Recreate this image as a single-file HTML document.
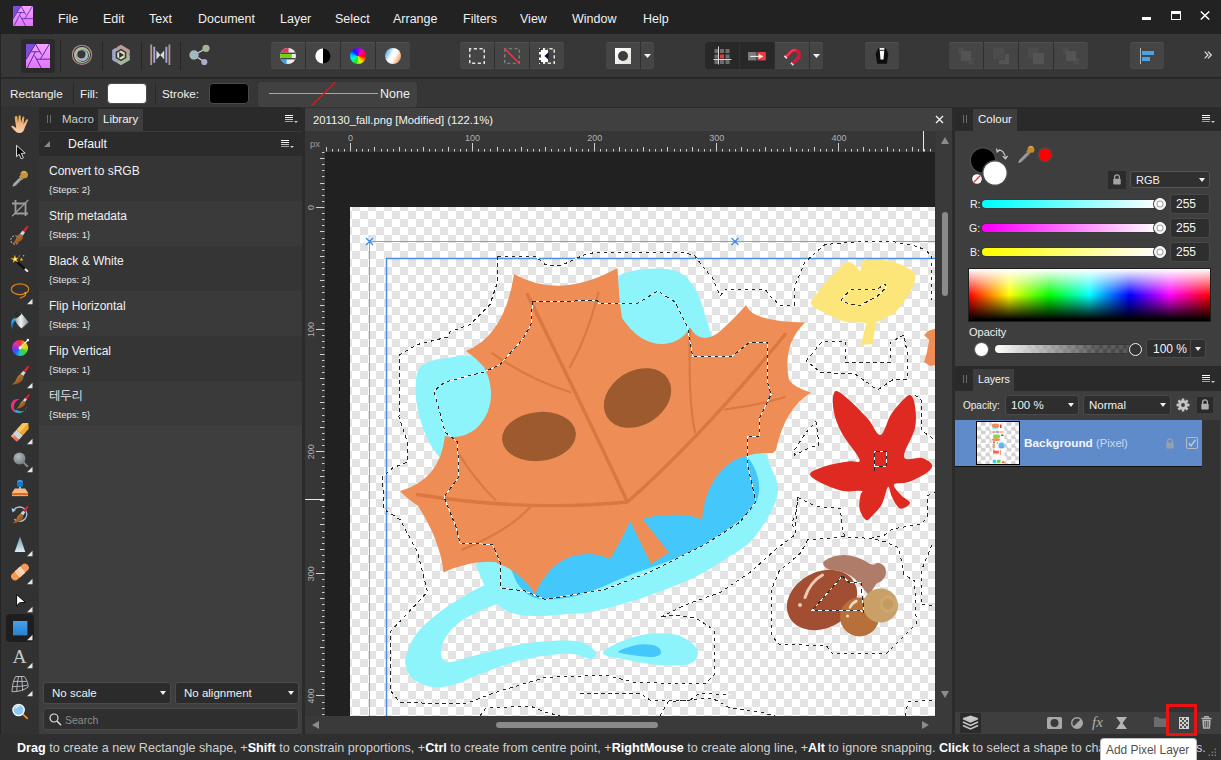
<!DOCTYPE html>
<html lang="en">
<head>
<meta charset="utf-8">
<title>Affinity Photo</title>
<style>
*{box-sizing:border-box;margin:0;padding:0}
html,body{width:1221px;height:760px;overflow:hidden;background:#2b2b2b}
body{font-family:"Liberation Sans","NanumGothic","Noto Sans CJK KR",sans-serif;font-size:12px;color:#e8e8e8;position:relative}
.abs{position:absolute}
#menubar{left:0;top:0;width:1221px;height:34px;background:#222222}
#menubar .mi{position:absolute;top:12px;font-size:12.5px;color:#f0f0f0;line-height:14px;white-space:nowrap}
#toolbar{left:0;top:34px;width:1221px;height:44px;background:#373737;border-bottom:1px solid #262626}
#ctxbar{left:0;top:79px;width:1221px;height:28px;background:#363636}
#ctxbar .t{position:absolute;top:8px;font-size:11.700px;line-height:14px;color:#f0f0f0;white-space:nowrap}
#tools{left:0;top:107px;width:39px;height:627px;background:#323232}
#macro{left:39px;top:107px;width:263px;height:627px;background:#3e3e3e}
.phead{position:absolute;left:0;top:0;right:0;height:24px;background:#2a2a2a}
.tab{position:absolute;top:2px;height:22px;font-size:11.5px;line-height:14px;padding-top:3px;color:#cfcfcf;white-space:nowrap}
.tab.on{background:#3e3e3e;color:#f4f4f4}
.grip{position:absolute;top:8px;width:4px;height:8px;border-left:1px solid #6c6c6c;border-right:1px solid #6c6c6c}
.row{position:absolute;left:0;width:263px;height:45px}
.row b{position:absolute;left:10px;top:8px;font-weight:normal;font-size:12px;line-height:14px;color:#f0f0f0;white-space:nowrap}
.row i{position:absolute;left:10px;top:27.500px;font-style:normal;font-size:9.500px;line-height:11px;color:#e6e6e6;white-space:nowrap}
#doc{left:305px;top:108px;width:647px;height:626px;background:#383838}
#right{left:955px;top:108px;width:266px;height:626px;background:#3e3e3e}
#status{left:0;top:734px;width:1221px;height:26px;background:#2f2f2f;font-size:12.600px;line-height:14px;color:#d0d0d0;white-space:nowrap;overflow:hidden}
#status b{color:#ffffff}

#lborder{left:0;top:34px;width:1px;height:700px;background:#242424;z-index:5}
.g{position:absolute;top:8px;height:27px;background:#454545;border-radius:3px;overflow:hidden;box-shadow:0 -1px 0 #4b4b4b inset,0 1px 0 #4f4f4f inset}
.g .d{position:absolute;top:0;width:1px;height:28px;background:#2f2f2f}
.g .dk{position:absolute;top:0;height:28px;background:#282828}
.sep{position:absolute;top:8px;width:1px;height:28px;background:#262626}
svg{position:absolute;overflow:visible}

.pm{position:absolute;width:12px;height:9px}
.pm:before{content:"";position:absolute;left:0;top:0;width:8px;height:7px;background:linear-gradient(#fff 0 1px,transparent 1px 2px,#f0f0f0 2px 3px,transparent 3px 4px,#c4c4c4 4px 5px,transparent 5px 6px,#a0a0a0 6px 7px)}
.pm:after{content:"";position:absolute;left:9px;top:6px;border:2px solid transparent;border-top:2.500px solid #c8c8c8;border-bottom:0}
.dd{position:absolute;height:22px;background:#2b2b2b;border:1px solid #4a4a4a;border-radius:3px;font-size:11.500px;line-height:14px;color:#f0f0f0;padding:3px 0 0 8px;white-space:nowrap}
.dd:after{content:"";position:absolute;right:4px;top:50%;margin-top:-2px;border:3.500px solid transparent;border-top:4px solid #f0f0f0;border-bottom:0}
</style>
</head>
<body>
<div id="lborder" class="abs"></div>
<!-- MENUBAR -->
<div id="menubar" class="abs">
<svg width="0" height="0" style="left:0;top:0"><defs>
<linearGradient id="lg1" x1="0" y1="0" x2="0" y2="1"><stop offset="0" stop-color="#f4a4ff"/><stop offset="1" stop-color="#e474fa"/></linearGradient>
<g id="aflogo"><rect width="24" height="24" fill="url(#lg1)"/><path d="M0 0h9.500L0 15.600z" fill="#7a4ed8"/><g stroke="#5b2aa6" stroke-width="1" fill="none"><path d="M9.500 0L0 15.600"/><path d="M23.500 0L14.300 15.200"/><path d="M9.500 0L15.600 10.600"/><path d="M5.300 7.800H13.800"/><path d="M9.400 7.800L1.200 24"/><path d="M8.600 11.600L15.200 24"/><path d="M10.400 15.200H24"/></g></g>
</defs></svg>
<svg style="left:13px;top:6px" width="20" height="20" viewBox="0 0 24 24"><use href="#aflogo"/></svg>
<span class="mi" style="left:58px">File</span>
<span class="mi" style="left:103px">Edit</span>
<span class="mi" style="left:149px">Text</span>
<span class="mi" style="left:198px">Document</span>
<span class="mi" style="left:280px">Layer</span>
<span class="mi" style="left:335px">Select</span>
<span class="mi" style="left:393px">Arrange</span>
<span class="mi" style="left:463px">Filters</span>
<span class="mi" style="left:520px">View</span>
<span class="mi" style="left:572px">Window</span>
<span class="mi" style="left:643px">Help</span>
<div class="abs" style="left:1142px;top:17px;width:9px;height:3px;background:#fff"></div>
<div class="abs" style="left:1171px;top:11px;width:10px;height:9px;border:1px solid #fff;border-top-width:3px"></div>
<svg style="left:1200px;top:11px" width="10" height="9" viewBox="0 0 10 9"><path d="M0.800 0.500L9.200 8.500M9.200 0.500L0.800 8.500" stroke="#fff" stroke-width="1.500"/></svg>
</div>
<!-- TOOLBAR -->
<div id="toolbar" class="abs">

<div class="abs" style="left:21px;top:5px;width:34px;height:34px;background:#2a2a2a;border-radius:3px"></div>
<svg style="left:26px;top:10px" width="24" height="24" viewBox="0 0 24 24"><use href="#aflogo"/></svg>
<div class="sep" style="left:60px;top:6px;height:32px"></div>
<div class="sep" style="left:102px"></div>
<div class="sep" style="left:141px"></div>
<div class="sep" style="left:180px"></div>
<!-- liquify persona -->
<svg style="left:71px;top:10px" width="22" height="22" viewBox="71 44 22 22"><circle cx="82" cy="54.800" r="9.600" fill="none" stroke="#b08c86" stroke-width="1.100"/><path fill-rule="evenodd" fill="#b2bd9e" d="M74 55a8 8 0 1 0 16 0a8 8 0 1 0-16 0zM76.500 55.700a6.200 6.200 0 1 0 12.400 0a6.200 6.200 0 1 0-12.400 0z"/><path fill-rule="evenodd" fill="#a0b4c8" d="M76.400 55.300a5.900 5.900 0 1 0 11.800 0a5.900 5.900 0 1 0-11.800 0zM77.300 54.300a4.100 4.100 0 1 0 8.200 0a4.100 4.100 0 1 0-8.200 0z"/></svg>
<!-- develop persona -->
<svg style="left:109px;top:9px" width="24" height="24" viewBox="-12 -12 24 24"><path d="M-4.00 -7.90L0.00 -10.20L8.83 -5.10L8.83 -0.30L5.40 -0.30L5.40 -3.10L0.00 -6.20L-4.00 -3.90z" fill="#c09c98"/><path d="M8.84 0.49L8.83 5.10L0.00 10.20L-4.16 7.80L-2.44 4.83L-0.02 6.23L5.37 3.10L5.38 -1.51z" fill="#a6b996"/><path d="M-4.84 7.41L-8.83 5.10L-8.83 -5.10L-4.67 -7.50L-2.96 -4.53L-5.38 -3.13L-5.37 3.10L-1.38 5.41z" fill="#a2a6c8"/><path d="M0.00 -4.40L3.81 -2.20L3.81 2.20L0.00 4.40L-3.81 2.20L-3.81 -2.20z" fill="#dcdcc0"/><path d="M-1.800 -2.900L3 0L-1.800 2.900z" fill="#2e2e2e"/></svg>
<!-- tone mapping persona -->
<svg style="left:150px;top:10px" width="21" height="22" viewBox="0 0 21 22"><rect x="0.3" y="0.5" width="1.8" height="20.5" fill="#b8948f"/><rect x="18.5" y="0.5" width="1.8" height="20.5" fill="#b8948f"/><rect x="3.3" y="2.8" width="1.9" height="16" fill="#a9a7d2"/><rect x="15.4" y="2.8" width="1.9" height="16" fill="#a9a7d2"/><path d="M6.4 6.4l4 4.6-4 4.6z" fill="#d8d8e4"/><path d="M14.2 6.4l-4 4.6 4 4.6z" fill="#d8d8e4"/></svg>
<!-- export persona -->
<svg style="left:188px;top:9px" width="24" height="24" viewBox="0 0 24 24"><path d="M6 12L18 5.5M6 12l10.5 7" stroke="#d2d6d8" stroke-width="1.4" fill="none"/><circle cx="6" cy="12" r="4.7" fill="#a3b8c0"/><circle cx="18" cy="5.3" r="3.6" fill="#a3b394"/><circle cx="16.3" cy="19" r="3.1" fill="#b0aacb"/></svg>
<!-- auto group -->
<div class="g" style="left:271px;width:139px"><div class="d" style="left:34px"></div><div class="d" style="left:69px"></div><div class="d" style="left:104px"></div></div>
<svg style="left:280px;top:14px" width="16" height="16" viewBox="0 0 16 16"><defs><clipPath id="cc"><circle cx="8" cy="8" r="8"/></clipPath></defs><g clip-path="url(#cc)"><rect width="16" height="16" fill="#ececec"/><rect x="0" y="0" width="8.6" height="4.6" fill="#f0325a"/><rect x="0" y="6" width="11.8" height="4" fill="#6fd416"/><rect x="0" y="11.4" width="6.6" height="4.6" fill="#3aa0f0"/><rect x="0" y="4.6" width="16" height="1.4" fill="#454545"/><rect x="0" y="10" width="16" height="1.4" fill="#454545"/></g></svg>
<svg style="left:315px;top:14px" width="16" height="16" viewBox="0 0 16 16"><circle cx="8" cy="8" r="8" fill="#555"/><path d="M8 0.4a7.6 7.6 0 0 0 0 15.2z" fill="#fff"/><path d="M8 0.4a7.6 7.6 0 0 1 0 15.2z" fill="#000"/></svg>
<div class="abs" style="left:350px;top:14px;width:16px;height:16px;border-radius:50%;background:conic-gradient(from 90deg,#ff0000,#ffb000 12%,#e8ff00 20%,#20e020 30%,#00ffd0 42%,#00c0ff 52%,#0020ff 64%,#8000ff 74%,#ff00c0 86%,#ff0000)"></div>
<div class="abs" style="left:385px;top:14px;width:16px;height:16px;border-radius:50%;background:linear-gradient(118deg,#3f9fe6 8%,#ffffff 42%,#ffffff 58%,#f08a3c 92%)"></div>
<!-- selection group -->
<div class="g" style="left:460px;width:104px"><div class="d" style="left:34px"></div><div class="d" style="left:69px"></div></div>
<svg style="left:469px;top:14px" width="16" height="16" viewBox="0 0 16 16"><rect x="0.75" y="0.75" width="14.5" height="14.5" fill="none" stroke="#e2e2e2" stroke-width="1.5" stroke-dasharray="3.2 2.45" stroke-dashoffset="1.6"/></svg>
<svg style="left:504px;top:14px" width="16" height="16" viewBox="0 0 16 16"><rect x="0.75" y="0.75" width="14.5" height="14.5" fill="none" stroke="#8a8a8a" stroke-width="1.2" stroke-dasharray="3.2 2.45" stroke-dashoffset="1.6"/><path d="M0.5 0.5L15.5 15.5" stroke="#f0323c" stroke-width="1.7"/></svg>
<svg style="left:539px;top:14px" width="16" height="16" viewBox="0 0 16 16"><rect x="0" y="0" width="9" height="16" fill="#fff"/><rect x="0.75" y="0.75" width="14.5" height="14.5" fill="none" stroke="#e2e2e2" stroke-width="1.5" stroke-dasharray="3.2 2.45" stroke-dashoffset="1.6"/><path d="M1 1h3M1 1v3M1 15h3M1 15v-3M6.2 1h2.6M6.2 15h2.6M1 6.5v3" stroke="#111" stroke-width="1.5" fill="none"/><path d="M9.6 4.2L5.4 8l4.2 3.8z" fill="#0c1030"/></svg>
<!-- mask -->
<div class="g" style="left:606px;width:48px"><div class="d" style="left:34px"></div></div>
<div class="abs" style="left:615px;top:14px;width:16px;height:16px;background:linear-gradient(135deg,#ffffff,#e4e2dc)"></div>
<div class="abs" style="left:618px;top:17px;width:10px;height:10px;border-radius:50%;background:#3c3c3c"></div>
<svg style="left:644px;top:20px" width="7" height="4" viewBox="0 0 7 4"><path d="M0 0h7L3.5 4z" fill="#f2f2f2"/></svg>
<!-- snapping group -->
<div class="g" style="left:705px;width:118px"><div class="dk" style="left:0;width:34px"></div><div class="dk" style="left:35px;width:34px"></div><div class="d" style="left:34px;background:#333"></div><div class="d" style="left:69px"></div><div class="d" style="left:104px"></div></div>
<svg style="left:713px;top:12px" width="19" height="19" viewBox="0 0 19 19"><g fill="#6e6e6e"><rect x="1.5" y="3" width="4" height="4"/><rect x="7" y="3" width="4" height="4"/><rect x="12.5" y="3" width="4" height="4"/><rect x="1.5" y="8.5" width="4" height="4"/><rect x="12.5" y="8.5" width="4" height="4"/><rect x="1.5" y="14" width="4" height="4"/><rect x="7" y="14" width="4" height="4"/><rect x="12.5" y="14" width="4" height="4"/></g><rect x="7" y="8.5" width="4" height="4" fill="#ee3338"/><path d="M5.5 0.5v18M0.5 13.5h18" stroke="#d8d8d8" stroke-width="1"/></svg>
<svg style="left:748px;top:18px" width="18" height="9" viewBox="0 0 18 9"><rect x="0" y="0" width="8.4" height="8.4" fill="#7a7a7a"/><rect x="9.4" y="0" width="8.4" height="8.4" fill="#ee3d40"/><path d="M2.2 4.4h9.5" stroke="#eee" stroke-width="1.1"/><path d="M10.6 1.7L15.4 4.4l-4.8 2.7z" fill="#eee"/></svg>
<svg style="left:782px;top:12px" width="21" height="21" viewBox="0 0 21 21"><path d="M3.6 11.2L9.2 5.6a4.7 4.7 0 0 1 6.7 6.7L10.2 18" fill="none" stroke="#d81838" stroke-width="3.600"/><path d="M4.3 10.5L9.6 5.2a4.4 4.4 0 0 1 4.4-1" fill="none" stroke="#f0506a" stroke-width="1.2"/><path d="M3.1 11.7l1.1-1.1M9.6 18.6l1.1-1.1" stroke="#e8e4e4" stroke-width="3.600"/></svg>
<svg style="left:813px;top:20px" width="7" height="4" viewBox="0 0 7 4"><path d="M0 0h7L3.5 4z" fill="#f2f2f2"/></svg>
<!-- assistant -->
<div class="g" style="left:865px;width:34px"></div>
<svg style="left:875px;top:13px" width="14" height="17" viewBox="0 0 14 17"><path d="M3.2 1.2h7.6l2.6 5.5-1.6 10H2.2l-1.6-10z" fill="#0d0d0d"/><path d="M4.6 1h4.8v2.2H4.600z" fill="#f4f4f4"/><path d="M4.8 4h4.400l-0.700 8.600H5.500z" fill="#ffffff"/><path d="M4.600 3.100h4.800" stroke="#777" stroke-width="0.800"/></svg>
<!-- disabled group -->
<div class="g" style="left:949px;width:139px"><div class="d" style="left:34px"></div><div class="d" style="left:69px"></div><div class="d" style="left:104px"></div></div>
<svg style="left:949px;top:8px" width="139" height="28" viewBox="0 0 139 28"><g fill="#4c4c4c"><rect x="9" y="6" width="6" height="6"/><rect x="19" y="16" width="6" height="6"/><rect x="44" y="6" width="11" height="11"/><rect x="79" y="6" width="10" height="10"/><rect x="114" y="6" width="6" height="6"/><rect x="124" y="16" width="6" height="6"/></g><g fill="#545454"><rect x="12" y="9" width="10" height="10"/><path d="M60 12v10H50v-4h6v-6z"/><rect x="84" y="11" width="11" height="11"/><rect x="117" y="9" width="10" height="10"/></g></svg>
<!-- align -->
<div class="g" style="left:1130px;width:34px"></div>
<svg style="left:1139px;top:14px" width="16" height="16" viewBox="0 0 16 16"><rect x="1" y="0" width="1" height="16" fill="#b4b4b4"/><rect x="3" y="3" width="12" height="4" fill="#4aa3e6"/><rect x="3" y="9" width="8" height="4" fill="#4aa3e6"/></svg>
<svg style="left:1204px;top:17px" width="8" height="8" viewBox="0 0 8 8"><path d="M0.700 0.700L4 4 0.700 7.300M4 0.700L7.300 4 4 7.300" fill="none" stroke="#e0e0e0" stroke-width="1.200"/></svg>

</div>
<!-- CONTEXT BAR -->
<div id="ctxbar" class="abs">
<span class="t" style="left:10px">Rectangle</span>
<span class="t" style="left:80px">Fill:</span>
<span class="t" style="left:162px">Stroke:</span>
<span class="t" style="left:380px;z-index:2;font-size:12.500px">None</span>
<div class="abs" style="left:73px;top:4px;width:1px;height:21px;background:#282828"></div>
<div class="abs" style="left:155px;top:4px;width:1px;height:21px;background:#282828"></div>
<div class="abs" style="left:107px;top:4px;width:40px;height:21px;border:1px solid #4a4a4a;border-radius:4px;background:#fff"></div>
<div class="abs" style="left:209px;top:4px;width:40px;height:21px;border:1px solid #4a4a4a;border-radius:4px;background:#000"></div>
<div class="abs" style="left:258px;top:3px;width:159px;height:25px;background:#414141;border-radius:3px;box-shadow:0 0 0 1px #333"></div>
<svg style="left:258px;top:3px" width="159" height="25" viewBox="0 0 159 25"><path d="M11 11.500H120" stroke="#a8a8a8" stroke-width="1"/><path d="M54 23.500L77.500 0" stroke="#e01818" stroke-width="1.300"/></svg>

</div>
<!-- LEFT TOOLS -->
<div id="tools" class="abs">
<div class="abs" style="left:12px;top:233px;width:16px;height:16px;border-radius:50%;background:conic-gradient(from 0deg,#f03030,#f0a020 12%,#e8e820 22%,#38d828 36%,#20c8c0 50%,#2860f0 62%,#9030e0 76%,#e030b0 88%,#f03030)"></div>
<svg style="left:0;top:0" width="39" height="627" viewBox="0 107 39 627">
<defs>
<linearGradient id="hand" x1="0" y1="0" x2="0" y2="1"><stop offset="0" stop-color="#e0a24c"/><stop offset="0.550" stop-color="#f0b884"/><stop offset="1" stop-color="#f8d0b4"/></linearGradient>
<linearGradient id="bristle" x1="0" y1="0" x2="1" y2="1"><stop offset="0" stop-color="#d89a50"/><stop offset="1" stop-color="#7a3c0c"/></linearGradient>
<linearGradient id="cone" x1="0" y1="0" x2="0" y2="1"><stop offset="0" stop-color="#6e9eb2"/><stop offset="1" stop-color="#dcebf0"/></linearGradient>
<linearGradient id="bluesq" x1="0" y1="0" x2="0" y2="1"><stop offset="0" stop-color="#45a2ee"/><stop offset="1" stop-color="#2a80cc"/></linearGradient>
<linearGradient id="silver" x1="0" y1="0" x2="1" y2="0"><stop offset="0" stop-color="#8c979c"/><stop offset="0.450" stop-color="#eef2f4"/><stop offset="1" stop-color="#7c878c"/></linearGradient>
<radialGradient id="dodge" cx="0.400" cy="0.350" r="0.700"><stop offset="0" stop-color="#b4bcc0"/><stop offset="1" stop-color="#727c82"/></radialGradient>
<g id="brush"><path d="M17.500 0.200L14 5.800l-2.600-1.600 4.200-4.600c0.800-0.800 2.400 0 1.900 0.600z" fill="#e8202c"/><path d="M11.400 4.200l2.600 1.600-2.200 3.400-3-1.900z" fill="#d4d8da"/><path d="M8.800 7.300l3 1.900c0.600 2.600-0.800 5-3.600 6.600-2.400 1.400-5.600 2-8.200 2 2.400-1.200 3.600-2.600 4.600-5 0.900-2.300 2.200-4.500 4.200-5.500z" fill="url(#bristle)"/></g>
</defs>
<!-- hand -->
<path d="M15.600 116.200c1-0.500 1.700 0 1.800 1l0.600 5.800 0.700-7c0.100-1.100 1.900-1.100 2 0l0.300 7.100 1.500-5.900c0.300-1 1.900-0.700 1.800 0.400l-0.800 6.600 2.800-4.600c0.600-0.900 2-0.200 1.600 0.800l-2.800 6.600c-0.800 2-1.100 3.800-2.600 5-1.600 1.200-4.300 1.300-6 0.200-1.400-0.900-2.700-2.800-4.900-4.900-0.800-0.800 0-2.100 1.300-1.500l3.300 2.100-1.500-10.300c-0.100-0.700 0.300-1.200 0.900-1.400z" fill="url(#hand)"/>
<!-- move arrow -->
<path d="M16.500 145.300v11.400l2.700-2.400 2 4.500 2.200-1-2-4.400 3.800-0.200z" fill="#0a0a0a" stroke="#d8d8d8" stroke-width="1" stroke-linejoin="round"/>
<!-- dropper -->
<path d="M12.300 186.800l1.300-3.200 6.600-6.700 2.200 2.200-6.800 6.600z" fill="#9a9a9a"/><path d="M13 186l6.600-7.400" stroke="#c8c8c8" stroke-width="0.800"/>
<path d="M19 176.600l1.700-1.500c-0.800-1.400-0.300-2.400 0.700-3.300 1.500-1.300 3.800-1.300 5.400 0.200 1.500 1.400 1.700 3.800 0.400 5.300-0.900 1-2 1.400-3.300 0.800l-1.600 1.800z" fill="#c8943a"/><path d="M22 172.400c1.300-1 3-0.800 4 0.100" stroke="#e8c070" stroke-width="0.900" fill="none"/>
<!-- crop -->
<path d="M15.500 200v13.500H28M12 203.500h13.500V216" fill="none" stroke="#9c9c9c" stroke-width="1.800"/><path d="M12 216.200L28.300 200" stroke="#9c9c9c" stroke-width="1.200"/>
<!-- selection brush -->
<circle cx="15" cy="240" r="4.200" fill="none" stroke="#c8c8c8" stroke-width="1" stroke-dasharray="1.800 1.500"/>
<use href="#brush" transform="translate(11.500 226.800) scale(0.960)"/>
<!-- wand -->
<path d="M17.500 262.500L27.300 271" stroke="#0c0c0c" stroke-width="2.200" stroke-linecap="round"/><path d="M25.600 269.500l1.700 1.500" stroke="#e8e8e8" stroke-width="2.200" stroke-linecap="round"/>
<path d="M15 254.800l0.900 3.300 3.300-0.500-2.700 1.900 1.600 3-2.900-1.700-2.500 2.300 0.800-3.200-3.100-1.300 3.300-0.400z" fill="#f8c020"/><circle cx="15.200" cy="259.300" r="1.100" fill="#fff4c0"/>
<path d="M21.500 257.500l0.500 1.300 1.300 0.200-1.100 0.800 0.300 1.400-1.100-0.800-1.100 0.700 0.400-1.300-1-0.900 1.300-0.100z" fill="#f0b818"/><circle cx="23.600" cy="255.800" r="0.700" fill="#f0b818"/><circle cx="19.300" cy="256" r="0.600" fill="#f0b818"/>
<!-- lasso -->
<ellipse cx="20" cy="289.200" rx="8.700" ry="5.400" fill="none" stroke="#e08218" stroke-width="1.200"/><path d="M25.300 292.800c1 1.800-0.500 3.600-2.400 4-1.800 0.300-2.700 0.800-2.800 2" fill="none" stroke="#e08218" stroke-width="1.200"/><circle cx="25.300" cy="293" r="1.100" fill="#f0a030"/>
<path d="M32.500 298.8v5.500h-5.500z" fill="#e4e4e4"/>
<!-- bucket -->
<path d="M15.200 318c-2.800 0.200-4.200 2.800-4 6.400 0.100 1.800 0.500 3 1.300 4.600-0.400-3.400 0.400-6.200 3.200-8.400z" fill="#1e8ee0"/><path d="M12 322c0.500-2 1.800-3.400 3.600-3.600" stroke="#70c8ff" stroke-width="0.800" fill="none"/>
<path d="M14.300 317.500l6.200-5.300 8.200 10-7 6.400c-3.400-2.400-6.200-6.400-7.400-11.100z" fill="url(#silver)"/><path d="M14.300 317.500c1.600-2.500 4-4.500 6.200-5.300 1 0.600 1.200 1.400 0.600 2.400-1.400 1.800-3.400 3.200-5.400 3.900-0.800 0.100-1.400-0.300-1.400-1z" fill="#2a2e30"/><path d="M21.700 328.600l7-6.400" stroke="#5c666a" stroke-width="1"/><path d="M19 311.600c-2.500 0.500-4 2-4.500 4" stroke="#222" stroke-width="0.900" fill="none"/>
<!-- colour wheel brush -->

<path d="M20 348l7.800-7.800" stroke="#fff" stroke-width="1.100"/><circle cx="20" cy="348" r="1.400" fill="#fff"/><circle cx="27.900" cy="340.100" r="1.300" fill="#fff"/>
<!-- paint brush -->
<use href="#brush" transform="translate(11.600 366.800) scale(1)"/>
<path d="M32.500 382.8v5.500h-5.500z" fill="#e4e4e4"/>
<!-- mixer brush -->
<path d="M19.500 399.300c-4.600-1.200-8.600 2-8.600 6.400 0 4.200 3.400 7.400 7.800 7.200-3.200-0.800-5-3.600-4.800-6.600 0.200-3.200 2.400-5.800 5.600-7z" fill="#e8307c"/><path d="M13.700 410.500c1.800 2 4.400 2.800 7 2.200 1.600-0.400 2.800-1 3.800-1.900-2.600 0.800-5.200 0.900-7.600-0.700z" fill="#20b8d8"/><circle cx="25.600" cy="409" r="0.500" fill="#20c8e0"/><circle cx="26.600" cy="407.300" r="0.400" fill="#20c8e0"/>
<use href="#brush" transform="translate(16 394.800) scale(0.780)"/>
<!-- eraser -->
<g transform="rotate(-48 20 432)"><rect x="10.600" y="428" width="3.600" height="8.400" rx="1.200" fill="#f07058"/><rect x="10.800" y="428" width="3.200" height="2.400" rx="1" fill="#f8a090"/><rect x="13.600" y="428" width="6" height="8.400" fill="#c4c8ca"/><path d="M15 428v8.400M16.600 428v8.400M18.200 428v8.400" stroke="#f0f0f0" stroke-width="0.600"/><path d="M19.600 428h8.600l4 4.200-4 4.200h-8.600z" fill="#f0a830"/><path d="M19.600 428h8.600l4 4.200H19.600z" fill="#f8c860"/></g>
<path d="M32.500 438.8v5.500h-5.500z" fill="#e4e4e4"/>
<!-- dodge -->
<path d="M23.500 462.500l3.800 3.800" stroke="#7c8890" stroke-width="2" stroke-linecap="round"/><circle cx="19.500" cy="458.400" r="6" fill="url(#dodge)"/>
<path d="M32.500 466.8v5.500h-5.500z" fill="#e4e4e4"/>
<!-- clone stamp -->
<path d="M17 482c0-1.500 1.200-2.200 3-2.200s3 0.700 3 2.200v3.600c0 1-1.200 1.700-3 1.700s-3-0.700-3-1.700z" fill="#1878c8"/><path d="M17.800 481.400c1-0.600 3.400-0.600 4.400 0" stroke="#60b8f0" stroke-width="1" fill="none"/><rect x="19.300" y="487" width="1.400" height="3" fill="#e4e4e4"/>
<path d="M14.800 488.500h10.400l3 4.500H11.800z" fill="#f4bc80"/><path d="M11.800 493h16.400v2.200H11.800z" fill="#e06820"/><path d="M12 495.200h16v0.900H12z" fill="#f8d0a0"/>
<!-- undo brush -->
<path d="M13.600 510.200a7.200 7.200 0 1 1 0.800 9" fill="none" stroke="#a8c8e8" stroke-width="1.300"/><path d="M11.600 508l0.800 4.400 3.600-2.400z" fill="#a8c8e8"/>
<use href="#brush" transform="translate(12.400 506.800) scale(0.920)"/>
<!-- sharpen -->
<path d="M20 536.500l5.300 15.500H14.700z" fill="url(#cone)"/>
<path d="M32.500 550.8v5.500h-5.500z" fill="#e4e4e4"/>
<!-- bandaid -->
<g transform="rotate(-42 20 572)"><rect x="9.500" y="568" width="21" height="8" rx="4" fill="#f09c58"/><rect x="16.400" y="568" width="7.200" height="8" fill="#f8d4b8"/><path d="M18.500 568v8" stroke="#f0b088" stroke-width="0.800"/></g>
<path d="M32.500 578.8v5.500h-5.500z" fill="#e4e4e4"/>
<!-- node arrow -->
<path d="M16.600 594.500v11.600l2.900-3.300 5.900-0.400z" fill="#ffffff" stroke="#0c0c0c" stroke-width="1" stroke-linejoin="round"/>
<path d="M32.500 606.8v5.500h-5.500z" fill="#e4e4e4"/>
<!-- rectangle (selected) -->
<rect x="6" y="614" width="28" height="28" rx="4" fill="#1e1e1e"/>
<rect x="13" y="621" width="14.400" height="14.400" fill="url(#bluesq)"/>
<path d="M32.500 634.8v5.500h-5.500z" fill="#e4e4e4"/>
<!-- text -->
<text x="12.600" y="663" font-family="Liberation Serif,serif" font-size="19.500" fill="#c8c8c8">A</text>
<path d="M32.500 662.8v5.500h-5.500z" fill="#e4e4e4"/>
<!-- mesh warp -->
<path d="M15.600 676.500h8.600c2.400 2.800 3.800 6.400 4 10.400-3.600 3.200-10 5-16.200 4.800 0.200-6 1.400-11.200 3.600-15.200z" fill="#2c3038" stroke="#c4c4c4" stroke-width="0.900"/><path d="M18.600 676.500c-1 4-1.800 9.600-1.800 15M21.600 676.500c0.400 4.800 0.900 10 1.100 14.200M13.800 681.400h12.800M12.500 686.600c5.200 0 10.600-0.400 14.800-1.400" fill="none" stroke="#c4c4c4" stroke-width="0.900"/>
<path d="M32.500 690.8v5.500h-5.500z" fill="#e4e4e4"/>
<!-- zoom -->
<path d="M22.800 714.200l4.400 4.200" stroke="#f09030" stroke-width="1.800" stroke-linecap="round"/><circle cx="18.600" cy="710" r="5.600" fill="#8cc8f4" stroke="#f4f4f4" stroke-width="1.500"/><path d="M15.600 708.600c0.600-1.600 2-2.400 3.600-2.400" stroke="#e0f2ff" stroke-width="1.200" fill="none"/>
</svg>

</div>
<!-- MACRO/LIBRARY PANEL -->
<div id="macro" class="abs">
<div class="phead">
<div class="grip" style="left:8px"></div>
<div class="tab" style="left:22px;padding-left:1px;width:37px">Macro</div>
<div class="tab on" style="left:59px;width:45px;padding-left:5px">Library</div>
</div>
<div class="pm" style="left:246px;top:8px"></div>
<div class="abs" style="left:0;top:24px;width:263px;height:1px;background:#3a3a3a"></div>
<div class="abs" style="left:0;top:25px;width:263px;height:24px;background:#2b2b2b"><svg style="left:5px;top:9px" width="6" height="6" viewBox="0 0 6 6"><path d="M6 0v6H0z" fill="#8a8a8a"/></svg><span class="abs" style="left:29px;top:5px;font-size:12.300px;line-height:14px;color:#f4f4f4">Default</span><div class="pm" style="left:242px;top:8px"></div></div>
<div class="row" style="top:49px;background:#353535"><b>Convert to sRGB</b><i>{Steps: 2}</i></div>
<div class="row" style="top:94px;background:#3a3a3a"><b>Strip metadata</b><i>{Steps: 1}</i></div>
<div class="row" style="top:139px;background:#353535"><b>Black &amp; White</b><i>{Steps: 2}</i></div>
<div class="row" style="top:184px;background:#3a3a3a"><b>Flip Horizontal</b><i>{Steps: 1}</i></div>
<div class="row" style="top:229px;background:#353535"><b>Flip Vertical</b><i>{Steps: 1}</i></div>
<div class="row" style="top:274px;background:#3a3a3a"><b>테두리</b><i>{Steps: 5}</i></div>
<div class="dd" style="left:4px;top:575px;width:128px">No scale</div>
<div class="dd" style="left:136px;top:575px;width:124px">No alignment</div>
<div class="abs" style="left:4px;top:601px;width:256px;height:22px;background:#2f2f2f;border:1px solid #484848;border-radius:4px"><svg style="left:5px;top:4px" width="13" height="13" viewBox="0 0 13 13"><circle cx="5" cy="5" r="4" fill="none" stroke="#e0e0e0" stroke-width="1.200"/><path d="M8 8l4 4.300" stroke="#e0e0e0" stroke-width="1.400"/></svg><span class="abs" style="left:21px;top:4px;font-size:10.500px;line-height:14px;color:#8c8c8c">Search</span></div>

</div>
<!-- DOCUMENT -->
<div id="doc" class="abs">
<!--DOC-START-->
<div class="abs" style="left:0;top:0;width:647px;height:23px;background:#404040"></div>
<span class="abs" style="left:8px;top:5px;font-size:11.250px;line-height:14px;color:#f2f2f2;white-space:nowrap">201130_fall.png [Modified] (122.1%)</span>
<svg style="left:630px;top:7px" width="9" height="9" viewBox="0 0 9 9"><path d="M1 1l7 7M8 1l-7 7" stroke="#f0f0f0" stroke-width="1.400"/></svg>
<div class="abs" style="left:0;top:23px;width:647px;height:603px;background:#363636"></div>
<svg style="left:0;top:23px" width="647" height="603" viewBox="305 131 647 603" font-family="Liberation Sans,sans-serif" font-size="9" fill="#b0b0b0"><text x="310" y="146.500" fill="#9a9a9a" font-size="9.500">px</text><path d="M326.5 147.0V151.500M332.5 149.0V151.500M338.5 149.0V151.500M344.5 149.0V151.500M350.5 143.0V151.500M356.5 149.0V151.500M362.5 149.0V151.500M368.5 149.0V151.500M374.5 147.0V151.500M381.5 149.0V151.500M387.5 149.0V151.500M393.5 149.0V151.500M399.5 147.0V151.500M405.5 149.0V151.500M411.5 149.0V151.500M417.5 149.0V151.500M423.5 147.0V151.500M429.5 149.0V151.500M435.5 149.0V151.500M442.5 149.0V151.500M448.5 147.0V151.500M454.5 149.0V151.500M460.5 149.0V151.500M466.5 149.0V151.500M472.5 143.0V151.500M478.5 149.0V151.500M484.5 149.0V151.500M490.5 149.0V151.500M497.5 147.0V151.500M503.5 149.0V151.500M509.5 149.0V151.500M515.5 149.0V151.500M521.5 147.0V151.500M527.5 149.0V151.500M533.5 149.0V151.500M539.5 149.0V151.500M545.5 147.0V151.500M551.5 149.0V151.500M558.5 149.0V151.500M564.5 149.0V151.500M570.5 147.0V151.500M576.5 149.0V151.500M582.5 149.0V151.500M588.5 149.0V151.500M594.5 143.0V151.500M600.5 149.0V151.500M606.5 149.0V151.500M613.5 149.0V151.500M619.5 147.0V151.500M625.5 149.0V151.500M631.5 149.0V151.500M637.5 149.0V151.500M643.5 147.0V151.500M649.5 149.0V151.500M655.5 149.0V151.500M661.5 149.0V151.500M667.5 147.0V151.500M674.5 149.0V151.500M680.5 149.0V151.500M686.5 149.0V151.500M692.5 147.0V151.500M698.5 149.0V151.500M704.5 149.0V151.500M710.5 149.0V151.500M716.5 143.0V151.500M722.5 149.0V151.500M729.5 149.0V151.500M735.5 149.0V151.500M741.5 147.0V151.500M747.5 149.0V151.500M753.5 149.0V151.500M759.5 149.0V151.500M765.5 147.0V151.500M771.5 149.0V151.500M777.5 149.0V151.500M783.5 149.0V151.500M790.5 147.0V151.500M796.5 149.0V151.500M802.5 149.0V151.500M808.5 149.0V151.500M814.5 147.0V151.500M820.5 149.0V151.500M826.5 149.0V151.500M832.5 149.0V151.500M838.5 143.0V151.500M845.5 149.0V151.500M851.5 149.0V151.500M857.5 149.0V151.500M863.5 147.0V151.500M869.5 149.0V151.500M875.5 149.0V151.500M881.5 149.0V151.500M887.5 147.0V151.500M893.5 149.0V151.500M899.5 149.0V151.500M906.5 149.0V151.500M912.5 147.0V151.500M918.5 149.0V151.500M924.5 149.0V151.500M930.5 149.0V151.500" stroke="#d0d0d0" stroke-width="1" fill="none"/><text x="350.5" y="140.500" text-anchor="middle">0</text><text x="472.6" y="140.500" text-anchor="middle">100</text><text x="594.7" y="140.500" text-anchor="middle">200</text><text x="716.8" y="140.500" text-anchor="middle">300</text><text x="838.9" y="140.500" text-anchor="middle">400</text><path d="M322.0 152.5H324.500M320.0 158.5H324.500M322.0 164.5H324.500M322.0 170.5H324.500M322.0 176.5H324.500M320.0 183.5H324.500M322.0 189.5H324.500M322.0 195.5H324.500M322.0 201.5H324.500M316.0 207.5H324.500M322.0 213.5H324.500M322.0 219.5H324.500M322.0 225.5H324.500M320.0 231.5H324.500M322.0 238.5H324.500M322.0 244.5H324.500M322.0 250.5H324.500M320.0 256.5H324.500M322.0 262.5H324.500M322.0 268.5H324.500M322.0 274.5H324.500M320.0 280.5H324.500M322.0 286.5H324.500M322.0 292.5H324.500M322.0 299.5H324.500M320.0 305.5H324.500M322.0 311.5H324.500M322.0 317.5H324.500M322.0 323.5H324.500M316.0 329.5H324.500M322.0 335.5H324.500M322.0 341.5H324.500M322.0 347.5H324.500M320.0 354.5H324.500M322.0 360.5H324.500M322.0 366.5H324.500M322.0 372.5H324.500M320.0 378.5H324.500M322.0 384.5H324.500M322.0 390.5H324.500M322.0 396.5H324.500M320.0 402.5H324.500M322.0 408.5H324.500M322.0 415.5H324.500M322.0 421.5H324.500M320.0 427.5H324.500M322.0 433.5H324.500M322.0 439.5H324.500M322.0 445.5H324.500M316.0 451.5H324.500M322.0 457.5H324.500M322.0 463.5H324.500M322.0 470.5H324.500M320.0 476.5H324.500M322.0 482.5H324.500M322.0 488.5H324.500M322.0 494.5H324.500M320.0 500.5H324.500M322.0 506.5H324.500M322.0 512.5H324.500M322.0 518.5H324.500M320.0 524.5H324.500M322.0 531.5H324.500M322.0 537.5H324.500M322.0 543.5H324.500M320.0 549.5H324.500M322.0 555.5H324.500M322.0 561.5H324.500M322.0 567.5H324.500M316.0 573.5H324.500M322.0 579.5H324.500M322.0 586.5H324.500M322.0 592.5H324.500M320.0 598.5H324.500M322.0 604.5H324.500M322.0 610.5H324.500M322.0 616.5H324.500M320.0 622.5H324.500M322.0 628.5H324.500M322.0 634.5H324.500M322.0 640.5H324.500M320.0 647.5H324.500M322.0 653.5H324.500M322.0 659.5H324.500M322.0 665.5H324.500M320.0 671.5H324.500M322.0 677.5H324.500M322.0 683.5H324.500M322.0 689.5H324.500M316.0 695.5H324.500M322.0 702.5H324.500M322.0 708.5H324.500M322.0 714.5H324.500" stroke="#d0d0d0" stroke-width="1" fill="none"/><text transform="translate(314 207.5) rotate(-90)" text-anchor="middle">0</text><text transform="translate(314 329.6) rotate(-90)" text-anchor="middle">100</text><text transform="translate(314 451.7) rotate(-90)" text-anchor="middle">200</text><text transform="translate(314 573.8) rotate(-90)" text-anchor="middle">300</text><text transform="translate(314 695.9) rotate(-90)" text-anchor="middle">400</text><path d="M923.500 131V151.500" stroke="#e8e8e8" stroke-width="1"/><path d="M305 499.500H324.500" stroke="#e8e8e8" stroke-width="1"/></svg>
<div id="cv" class="abs" style="left:20px;top:44px;width:610px;height:564px;background:#212121;overflow:hidden"><!--CANVAS-START-->
<svg style="left:0;top:0" width="610" height="564" viewBox="325 152 610 564">
<defs><pattern id="chk" x="352" y="211" width="16" height="16" patternUnits="userSpaceOnUse"><rect width="16" height="16" fill="#ffffff"/><rect x="8" y="0" width="8" height="8" fill="#e3e3e3"/><rect x="0" y="8" width="8" height="8" fill="#e3e3e3"/></pattern></defs>
<rect x="350" y="207" width="600" height="520" fill="url(#chk)"/>
<path d="M477.4 561.0C474.1 567.0 479.1 571.3 480.5 575.8C481.9 580.3 483.2 583.3 486.0 588.0C488.8 592.7 493.7 600.1 497.4 604.0C501.1 607.9 504.1 609.8 508.0 611.6C511.9 613.4 514.9 614.3 520.5 615.0C526.1 615.7 533.4 616.2 541.6 616.0C549.9 615.8 561.8 614.4 570.0 613.7C578.2 613.0 579.0 614.6 591.0 612.0C603.0 609.4 624.8 603.8 642.0 598.0C659.2 592.2 679.3 584.5 694.0 577.5C708.7 570.5 720.3 562.2 730.0 556.0C739.7 549.8 745.0 547.7 752.0 540.0C759.0 532.3 767.7 518.7 772.0 510.0C776.3 501.3 778.3 495.5 778.0 488.0C777.7 480.5 772.7 471.3 770.0 465.0C767.3 458.7 767.0 452.2 762.0 450.0C757.0 447.8 750.3 448.7 740.0 452.0C729.7 455.3 716.7 462.0 700.0 470.0C683.3 478.0 663.3 491.7 640.0 500.0C616.7 508.3 583.3 513.3 560.0 520.0C536.7 526.7 513.8 533.2 500.0 540.0C486.2 546.8 480.6 555.0 477.4 561.0Z" fill="#8df4fc"/>
<path d="M505.0 578.0C499.4 576.2 490.5 582.9 484.7 585.3C478.9 587.7 477.4 588.2 470.0 592.6C462.6 597.0 449.3 604.9 440.5 611.6C431.7 618.3 423.0 625.6 417.4 632.6C411.8 639.6 408.7 648.1 406.8 653.7C404.9 659.3 404.8 661.8 405.8 666.0C406.8 670.2 408.6 675.5 413.0 679.0C417.4 682.5 425.3 686.0 432.0 687.0C438.7 688.0 445.3 687.0 453.0 685.0C460.7 683.0 469.2 678.2 478.4 674.7C487.6 671.2 498.2 667.0 508.0 664.0C517.8 661.0 526.7 658.5 537.0 656.8C547.3 655.1 562.0 653.6 570.0 653.7C578.0 653.8 581.3 656.6 585.0 657.5C588.7 658.4 590.2 659.8 592.0 659.0C593.8 658.2 596.8 655.4 596.0 653.0C595.2 650.6 591.3 646.7 587.0 644.6C582.7 642.5 578.3 641.0 570.0 640.6C561.7 640.2 547.3 640.9 537.0 642.0C526.7 643.1 518.5 644.7 508.0 647.0C497.5 649.3 483.2 653.3 474.0 655.8C464.8 658.2 457.9 660.8 453.0 661.7C448.1 662.6 446.7 662.3 444.7 661.0C442.7 659.7 441.0 657.4 441.0 653.7C441.0 650.0 442.0 644.0 444.7 639.0C447.4 634.0 451.8 628.6 457.4 624.0C463.0 619.4 471.7 614.9 478.4 611.6C485.1 608.3 490.8 606.6 497.4 604.0C504.0 601.4 516.7 600.3 518.0 596.0C519.3 591.7 510.6 579.8 505.0 578.0Z" fill="#8df4fc"/>
<path d="M500.0 560.0C491.7 566.3 506.7 563.5 510.0 568.0C513.3 572.5 515.0 581.8 520.0 587.0C525.0 592.2 530.0 597.7 540.0 599.0C550.0 600.3 565.0 599.0 580.0 595.0C595.0 591.0 611.7 582.2 630.0 575.0C648.3 567.8 671.7 561.2 690.0 552.0C708.3 542.8 728.8 528.7 740.0 520.0C751.2 511.3 754.0 507.0 757.0 500.0C760.0 493.0 759.5 485.0 758.0 478.0C756.5 471.0 751.7 461.5 748.0 458.0C744.3 454.5 744.0 453.3 736.0 457.0C728.0 460.7 716.0 471.2 700.0 480.0C684.0 488.8 663.3 501.7 640.0 510.0C616.7 518.3 583.3 521.7 560.0 530.0C536.7 538.3 508.3 553.7 500.0 560.0Z" fill="#44c8fc"/>
<path d="M618.0 282.0C619.0 273.7 621.0 274.2 628.0 272.0C635.0 269.8 651.0 268.2 660.0 268.5C669.0 268.8 675.8 270.1 682.0 274.0C688.2 277.9 693.2 285.2 697.0 292.0C700.8 298.8 702.7 307.3 705.0 315.0C707.3 322.7 711.8 333.0 711.0 338.0C710.2 343.0 708.2 343.7 700.0 345.0C691.8 346.3 672.0 346.8 662.0 346.0C652.0 345.2 646.7 344.0 640.0 340.0C633.3 336.0 625.7 331.7 622.0 322.0C618.3 312.3 617.0 290.3 618.0 282.0Z" fill="#8df4fc"/>
<path d="M417.5 372.0C419.5 366.3 422.6 364.4 428.0 362.0C433.4 359.6 442.7 358.6 450.0 357.5C457.3 356.4 465.7 354.8 472.0 355.5C478.3 356.2 484.0 357.9 488.0 362.0C492.0 366.1 494.7 370.3 496.0 380.0C497.3 389.7 500.3 408.3 496.0 420.0C491.7 431.7 478.3 443.3 470.0 450.0C461.7 456.7 452.3 460.5 446.0 460.0C439.7 459.5 436.2 453.3 432.0 447.0C427.8 440.7 423.7 430.5 421.0 422.0C418.3 413.5 416.6 404.3 416.0 396.0C415.4 387.7 415.5 377.7 417.5 372.0Z" fill="#8df4fc"/>
<path d="M602.8 653.0C602.8 649.8 616.7 643.2 625.0 640.0C633.3 636.8 643.5 634.3 652.7 633.6C661.9 632.9 672.5 633.3 680.0 636.0C687.5 638.7 695.6 645.2 697.4 649.8C699.2 654.4 696.9 661.0 690.6 663.5C684.3 666.0 670.5 665.7 659.6 665.0C648.7 664.3 634.5 661.4 625.0 659.4C615.5 657.4 602.8 656.2 602.8 653.0Z" fill="#8df4fc"/>
<path d="M618.3 651.5C619.5 649.8 632.7 645.5 639.0 644.6C645.3 643.7 652.3 644.6 656.0 646.0C659.7 647.4 661.5 651.2 661.0 653.0C660.5 654.8 657.5 656.7 652.7 657.0C647.9 657.3 637.7 655.9 632.0 655.0C626.3 654.1 617.1 653.2 618.3 651.5Z" fill="#44c8fc"/>
<path d="M514 274Q560 300 617.5 268Q619 300 622 318Q640 345 664 344Q682 342 690 327.5Q700 345 718 333Q735 318 746 305Q752 322 805 322.5Q782 345 789 380Q795 388 811 392.5Q785 408 776 450L773 453Q750 452 733 461Q705 480 702 520Q690 512 655 516L642.5 519L669 552.5L651 564L630 521Q622 540 610 559Q590 550 570 557Q548 565 535 594Q522 572 495 562Q470 560 443.5 572.5Q440 540 418 506Q405 497 400 491Q440 480 445 436C478 444 504 405 484 367Q476 358 466 351Q505 335 514 274Z" fill="#ee8e56"/>
<path d="M527.500 294.500Q577 395 627.500 502M785 334.500Q702 436 627.500 502M417.500 494.500Q525 512 627.500 502" fill="none" stroke="#db7740" stroke-width="3.400" stroke-linecap="round"/>
<path d="M598.500 292.500Q588 335 570 367M492.500 353.500Q530 380 570 392M690 329.500Q688 400 695 432M725 409.500Q760 405 785 397M457.500 452Q475 480 495 499.500M462.500 549.500Q510 530 530 507" fill="none" stroke="#dc7942" stroke-width="2.200" stroke-linecap="round"/>
<ellipse cx="539" cy="436.500" rx="37" ry="24.500" transform="rotate(-6 539 436.500)" fill="#9c5a2e"/>
<ellipse cx="637.500" cy="398" rx="36" ry="27" transform="rotate(-32 637.500 398)" fill="#9c5a2e"/>
<path d="M811.0 304.0C809.8 300.5 815.2 296.0 818.0 292.0C820.8 288.0 824.2 283.7 827.5 280.0C830.8 276.3 834.6 273.0 838.0 270.0C841.4 267.0 845.0 262.7 848.0 262.0C851.0 261.3 854.0 264.5 856.0 266.0C858.0 267.5 859.0 271.3 860.0 271.0C861.0 270.7 861.0 265.9 862.0 264.0C863.0 262.1 863.0 260.3 866.0 259.5C869.0 258.7 875.2 258.5 880.0 259.0C884.8 259.5 890.3 261.0 895.0 262.5C899.7 264.0 904.7 266.1 908.0 268.0C911.3 269.9 914.0 271.3 915.0 274.0C916.0 276.7 914.8 280.9 914.0 284.0C913.2 287.1 911.8 289.3 910.0 292.5C908.2 295.7 905.5 299.7 903.0 303.0C900.5 306.3 898.0 310.0 895.0 312.5C892.0 315.0 888.3 316.3 885.0 318.0C881.7 319.7 879.5 321.8 875.0 322.5C870.5 323.2 863.4 322.8 858.0 322.5C852.6 322.2 848.0 322.6 842.5 321.0C837.0 319.4 830.2 315.8 825.0 313.0C819.8 310.2 812.2 307.5 811.0 304.0Z" fill="#fce67a"/>
<path d="M867 320L861 345L872.500 344L876.500 320Z" fill="#fce67a"/>
<path d="M940 327L928 331L924 335L929 340L927 352L924 362L930 366L940 364Z" fill="#ee8e56"/>
<path d="M835.0 391.5C837.4 389.7 842.5 394.4 848.0 399.0C853.5 403.6 862.6 413.0 868.0 419.0C873.4 425.0 876.7 435.8 880.5 435.0C884.3 434.2 887.1 420.5 891.0 414.5C894.9 408.5 900.7 402.2 904.0 399.0C907.3 395.8 909.2 394.3 911.0 395.5C912.8 396.7 914.3 400.6 915.0 406.0C915.7 411.4 916.8 419.5 915.0 428.0C913.2 436.5 902.8 452.0 904.0 457.0C905.2 462.0 917.3 456.7 922.0 458.0C926.7 459.3 931.2 462.5 932.0 465.0C932.8 467.5 930.4 470.2 926.5 473.0C922.6 475.8 913.9 480.1 908.5 482.0C903.1 483.9 895.2 482.3 894.0 484.5C892.8 486.7 898.3 491.9 901.0 495.0C903.7 498.1 910.2 500.8 910.0 503.0C909.8 505.2 903.0 509.5 900.0 508.5C897.0 507.5 894.0 500.6 892.0 497.0C890.0 493.4 889.7 485.8 888.0 487.0C886.3 488.2 884.5 499.3 882.0 504.0C879.5 508.7 875.7 512.3 873.0 515.0C870.3 517.7 868.2 521.1 866.0 520.0C863.8 518.9 860.4 512.7 859.5 508.5C858.6 504.3 860.2 497.9 860.5 495.0C860.8 492.1 864.3 491.7 861.5 491.0C858.7 490.3 849.8 492.2 843.5 491.0C837.2 489.8 829.1 486.8 823.5 484.0C817.9 481.2 809.6 477.0 810.0 474.0C810.4 471.0 819.7 468.1 826.0 466.0C832.3 463.9 842.4 462.6 848.0 461.5C853.6 460.4 860.6 464.3 859.5 459.5C858.4 454.7 845.8 440.8 841.5 432.5C837.2 424.2 834.6 416.8 833.5 410.0C832.4 403.2 832.6 393.3 835.0 391.5Z" fill="#de2a20"/>
<ellipse cx="822" cy="600" rx="37" ry="28" transform="rotate(-28 822 600)" fill="#a24e32"/>
<path d="M823.2 562.7C823.7 560.8 827.4 558.6 831.0 557.4C834.7 556.1 840.3 554.9 845.3 555.1C850.3 555.4 856.6 557.4 861.0 558.9C865.5 560.5 869.2 564.0 872.1 564.6C875.0 565.3 876.3 562.4 878.4 562.7C880.5 563.1 883.5 564.8 884.7 566.8C885.9 568.8 886.2 572.4 885.7 574.7C885.1 577.1 883.0 579.6 881.6 581.0C880.1 582.5 878.3 582.3 876.8 583.6C875.4 584.9 874.4 587.1 873.0 588.9C871.7 590.7 870.9 594.8 868.9 594.3C866.9 593.8 863.9 588.8 861.0 585.8C858.1 582.8 855.3 578.8 851.6 576.3C847.9 573.8 842.9 572.1 838.9 570.9C835.0 569.7 830.5 570.4 827.9 569.0C825.3 567.7 822.6 564.7 823.2 562.7Z" fill="#ae7c68"/>
<circle cx="859.500" cy="617" r="19.500" fill="#b8703a"/>
<ellipse cx="880.500" cy="605.500" rx="17.500" ry="17" fill="#c8a068"/><circle cx="888.500" cy="604" r="9" fill="#cca870"/><circle cx="888" cy="604" r="5.500" fill="#c49c62"/>
<path d="M805 597.500Q810 582 822.500 575" stroke="#f0c8b4" stroke-width="3" fill="none" stroke-linecap="round"/><circle cx="800" cy="605" r="2" fill="#f0c8b4"/>
<path d="M850 607.500Q852 603 856.500 601" stroke="#f4dcc0" stroke-width="2.500" fill="none" stroke-linecap="round"/><circle cx="847.500" cy="616" r="1.500" fill="#f4dcc0"/>
<path d="M369.500 241.500H940M369.500 241.500V720" stroke="#72a8ea" stroke-width="1" fill="none"/>
<path d="M386.500 720V258.500H940" stroke="#4c8ee8" stroke-width="1.500" fill="none"/>
<path d="M366 238l7 7M373 238l-7 7M731.500 238l7 7M738.500 238l-7 7" stroke="#3c8ae8" stroke-width="1.200"/>
<path d="M497.5 256.0L535.0 256.0L545.0 264.5L560.0 266.0L585.0 254.5L597.5 252.0L682.5 252.0L695.0 256.0L705.0 269.5L712.5 277.5L720.0 296.0L726.0 289.0L765.0 289.0L770.0 296.0L780.0 305.0L794.0 305.0L794.0 287.5L805.0 262.0L825.0 244.5L870.0 241.0L895.0 242.0L915.0 246.0L926.0 250.0L931.0 256.0L931.0 300.0M497.5 256.0L497.5 282.0L490.0 304.5L470.0 324.5L450.0 332.0L447.5 337.0L417.5 344.5L400.0 354.5L399.0 417.0L407.5 442.0L407.5 462.0L392.5 468.0L382.5 477.0L384.0 509.5L400.0 519.5L417.5 552.0L427.5 592.0L390.0 632.0L390.0 690.0L400.0 702.5L465.0 704.0L495.0 692.5L545.0 677.5L605.0 675.0L635.0 682.5L705.0 684.0L714.0 675.0L714.0 630.0L695.0 617.5L670.0 615.0L660.0 617.5L685.0 605.0L720.0 592.5L750.0 572.5L775.0 550.0L795.0 535.0L797.5 500.0M532.5 302.0L597.5 300.5L599.0 303.5L637.5 303.5L657.5 291.0L675.0 302.0L687.5 327.0L692.5 356.0L732.5 356.0L750.0 342.0L767.5 342.0L767.5 382.0L771.0 394.5L760.0 417.0L759.0 436.0L747.5 437.0L747.5 464.5L756.0 502.0L740.0 522.0L705.0 544.5L650.0 572.0L605.0 589.5L545.0 599.5L525.0 591.0L501.0 588.0L500.0 562.0L492.5 544.5L460.0 543.0L456.0 527.0L444.0 497.0L459.0 477.0L457.5 442.0L445.0 432.0L434.0 391.0L445.0 382.0L484.0 372.0L500.0 364.5L522.5 339.5L531.0 324.5L532.5 302.0M841.0 300.0L850.0 290.0L877.5 289.0L885.0 284.0L886.0 287.5L877.5 296.0L859.0 306.0L845.0 302.5L841.0 300.0M806.0 361.0L822.5 341.0L845.0 341.0L845.0 362.5L890.0 362.5L890.0 342.5L904.0 335.0L907.5 355.0L907.5 379.0L892.5 380.0L877.5 390.0L855.0 374.0L820.0 372.5L815.0 367.5L806.0 361.0M807.4 540.0L801.0 552.6L779.0 571.6L771.0 590.5L771.0 634.7L779.0 644.0L826.3 645.8L832.6 653.7L886.3 653.7L895.8 644.0L916.3 623.7L914.7 581.0L903.7 574.7L899.0 547.9L884.7 541.6L870.5 538.4L843.7 536.8L807.4 540.0M870.4 538.4L884.6 535.0L892.5 529.0L921.0 524.0L927.0 518.0L927.0 496.0L935.0 492.6M932.0 544.7L921.0 571.5L921.0 604.6L935.0 606.0M842.5 576.0L849.0 582.5L861.0 582.5L864.0 612.5L860.0 610.0L812.5 610.0L842.5 576.0M874.0 470.5L874.0 451.5L886.0 451.5L886.0 466.0L875.0 467.0M816.0 421.5L818.0 437.0L819.0 445.0L809.0 448.0L794.5 455.0L793.5 451.5L806.0 432.5L816.0 421.5M797.9 497.4L816.8 506.8L840.5 508.4L842.0 527.4L845.0 536.8M797.9 497.4L796.3 511.6L791.6 524.2L795.0 528.0M915.0 395.0L921.0 400.0L921.0 430.0L935.0 440.0M480.0 716.0L486.0 708.0L530.0 706.0L545.0 712.0L560.0 716.0M660.0 716.0L668.0 702.0L712.0 698.0L730.0 708.0L760.0 712.0L775.0 716.0M905.0 716.0L908.0 702.0L935.0 700.0M580.0 693.0L640.0 693.0L650.0 700.0L690.0 700.0L700.0 693.0L730.0 695.0" fill="none" stroke="#ffffff" stroke-width="1" shape-rendering="crispEdges"/><path d="M497.5 256.0L535.0 256.0L545.0 264.5L560.0 266.0L585.0 254.5L597.5 252.0L682.5 252.0L695.0 256.0L705.0 269.5L712.5 277.5L720.0 296.0L726.0 289.0L765.0 289.0L770.0 296.0L780.0 305.0L794.0 305.0L794.0 287.5L805.0 262.0L825.0 244.5L870.0 241.0L895.0 242.0L915.0 246.0L926.0 250.0L931.0 256.0L931.0 300.0M497.5 256.0L497.5 282.0L490.0 304.5L470.0 324.5L450.0 332.0L447.5 337.0L417.5 344.5L400.0 354.5L399.0 417.0L407.5 442.0L407.5 462.0L392.5 468.0L382.5 477.0L384.0 509.5L400.0 519.5L417.5 552.0L427.5 592.0L390.0 632.0L390.0 690.0L400.0 702.5L465.0 704.0L495.0 692.5L545.0 677.5L605.0 675.0L635.0 682.5L705.0 684.0L714.0 675.0L714.0 630.0L695.0 617.5L670.0 615.0L660.0 617.5L685.0 605.0L720.0 592.5L750.0 572.5L775.0 550.0L795.0 535.0L797.5 500.0M532.5 302.0L597.5 300.5L599.0 303.5L637.5 303.5L657.5 291.0L675.0 302.0L687.5 327.0L692.5 356.0L732.5 356.0L750.0 342.0L767.5 342.0L767.5 382.0L771.0 394.5L760.0 417.0L759.0 436.0L747.5 437.0L747.5 464.5L756.0 502.0L740.0 522.0L705.0 544.5L650.0 572.0L605.0 589.5L545.0 599.5L525.0 591.0L501.0 588.0L500.0 562.0L492.5 544.5L460.0 543.0L456.0 527.0L444.0 497.0L459.0 477.0L457.5 442.0L445.0 432.0L434.0 391.0L445.0 382.0L484.0 372.0L500.0 364.5L522.5 339.5L531.0 324.5L532.5 302.0M841.0 300.0L850.0 290.0L877.5 289.0L885.0 284.0L886.0 287.5L877.5 296.0L859.0 306.0L845.0 302.5L841.0 300.0M806.0 361.0L822.5 341.0L845.0 341.0L845.0 362.5L890.0 362.5L890.0 342.5L904.0 335.0L907.5 355.0L907.5 379.0L892.5 380.0L877.5 390.0L855.0 374.0L820.0 372.5L815.0 367.5L806.0 361.0M807.4 540.0L801.0 552.6L779.0 571.6L771.0 590.5L771.0 634.7L779.0 644.0L826.3 645.8L832.6 653.7L886.3 653.7L895.8 644.0L916.3 623.7L914.7 581.0L903.7 574.7L899.0 547.9L884.7 541.6L870.5 538.4L843.7 536.8L807.4 540.0M870.4 538.4L884.6 535.0L892.5 529.0L921.0 524.0L927.0 518.0L927.0 496.0L935.0 492.6M932.0 544.7L921.0 571.5L921.0 604.6L935.0 606.0M842.5 576.0L849.0 582.5L861.0 582.5L864.0 612.5L860.0 610.0L812.5 610.0L842.5 576.0M874.0 470.5L874.0 451.5L886.0 451.5L886.0 466.0L875.0 467.0M816.0 421.5L818.0 437.0L819.0 445.0L809.0 448.0L794.5 455.0L793.5 451.5L806.0 432.5L816.0 421.5M797.9 497.4L816.8 506.8L840.5 508.4L842.0 527.4L845.0 536.8M797.9 497.4L796.3 511.6L791.6 524.2L795.0 528.0M915.0 395.0L921.0 400.0L921.0 430.0L935.0 440.0M480.0 716.0L486.0 708.0L530.0 706.0L545.0 712.0L560.0 716.0M660.0 716.0L668.0 702.0L712.0 698.0L730.0 708.0L760.0 712.0L775.0 716.0M905.0 716.0L908.0 702.0L935.0 700.0M580.0 693.0L640.0 693.0L650.0 700.0L690.0 700.0L700.0 693.0L730.0 695.0" fill="none" stroke="#2a2a2a" stroke-width="1" stroke-dasharray="3.500 3.500" shape-rendering="crispEdges"/>
</svg>
<!--CANVAS-END--></div>
<div class="abs" style="left:631px;top:23px;width:16px;height:603px;background:#3a3a3a"></div>
<div class="abs" style="left:0;top:608px;width:631px;height:18px;background:#3a3a3a"></div>
<svg style="left:636px;top:29px" width="8" height="7" viewBox="0 0 8 7"><path d="M4 0l4 7H0z" fill="#8c8c8c"/></svg>
<svg style="left:636px;top:583px" width="8" height="7" viewBox="0 0 8 7"><path d="M4 7l4-7H0z" fill="#8c8c8c"/></svg>
<svg style="left:7px;top:613px" width="7" height="8" viewBox="0 0 7 8"><path d="M0 4l7-4v8z" fill="#8c8c8c"/></svg>
<svg style="left:617px;top:613px" width="7" height="8" viewBox="0 0 7 8"><path d="M7 4l-7-4v8z" fill="#8c8c8c"/></svg>
<div class="abs" style="left:637px;top:104px;width:6px;height:84px;border-radius:3px;background:#8a8a8a"></div>
<div class="abs" style="left:191px;top:614px;width:162px;height:6px;border-radius:3px;background:#8a8a8a"></div>
<!--DOC-END-->
</div>
<!-- RIGHT PANELS -->
<div id="right" class="abs">
<!--RIGHT-START-->
<div class="phead" style="height:23px"><div class="grip" style="left:8px;top:7px"></div><div class="tab on" style="left:18px;top:1px;width:44px;padding-left:5px">Colour</div><div class="pm" style="left:247px;top:7px"></div></div>
<svg style="left:10px;top:35px" width="90" height="48" viewBox="965 143 90 48"><circle cx="983" cy="160.500" r="13.500" fill="#4a4a4a"/><circle cx="983" cy="160.500" r="12" fill="#000"/><circle cx="995" cy="173" r="13" fill="#4a4a4a"/><circle cx="995" cy="173" r="11.500" fill="#fff"/><circle cx="977" cy="179" r="5.800" fill="#3a3a3a"/><circle cx="977" cy="179" r="4.800" fill="#fff"/><path d="M973.800 182.200l6.400-6.400" stroke="#f04040" stroke-width="1.500"/><path d="M997.500 150.500c4-1.500 7.500 2 7.800 7.500" fill="none" stroke="#d0d0d0" stroke-width="1.100"/><path d="M996.500 148.500l0.600 3.600 3-2.200" fill="none" stroke="#d0d0d0" stroke-width="1.100"/><path d="M1002.800 156.200l2.600 2.600 2.200-3" fill="none" stroke="#d0d0d0" stroke-width="1.100"/><path d="M1018 163.300l1.200-3.300 8.200-8.300 2.400 2.400-8.400 8.200z" fill="#8c8c8c"/><path d="M1019 162l8-8.500" stroke="#bdbdbd" stroke-width="0.800"/><path d="M1026.200 151.400l1.600-1.600c-0.600-1.200-0.200-2.200 0.600-3 1.400-1.300 3.600-1.300 5 0.100 1.400 1.400 1.500 3.600 0.300 5-0.800 0.900-1.800 1.200-3 0.700l-1.700 1.700z" fill="#c08a32"/><path d="M1029.500 147.200c1.100-0.800 2.500-0.600 3.300 0.200" stroke="#e8c070" stroke-width="0.900" fill="none"/><circle cx="1045" cy="154.700" r="7.500" fill="#4a4a4a"/><circle cx="1045" cy="154.700" r="6.300" fill="#ff0000"/></svg>
<div class="abs" style="left:153px;top:63px;width:18px;height:18px;background:#2c2c2c"></div>
<svg style="left:158px;top:66px" width="8" height="11" viewBox="0 0 8 11"><path d="M1.600 5V3.200a2.400 2.400 0 0 1 4.800 0V5" fill="none" stroke="#a4a4a4" stroke-width="1.300"/><rect x="0.300" y="4.800" width="7.400" height="5.800" rx="0.800" fill="#a4a4a4"/></svg>
<div class="dd" style="left:175px;top:63px;width:80px;height:17px;font-size:11px;line-height:12px;padding:2px 0 0 5px;background:#303030;border-color:#555">RGB</div>
<span class="abs" style="left:15px;top:89.5px;font-size:10.500px;line-height:12px;color:#f0f0f0">R:</span><div class="abs" style="left:27px;top:91.5px;width:183px;height:8px;border-radius:4px;background:linear-gradient(90deg,#00ffff 4%,#ffffff 96%);box-shadow:0 0 0 1px #383838"></div><div class="abs" style="left:198px;top:88.5px;width:14px;height:14px;border-radius:50%;background:#3a3a3a"></div><div class="abs" style="left:199px;top:89.5px;width:12px;height:12px;border-radius:50%;background:#fff;border:1px solid #fff;box-shadow:inset 0 0 0 1.500px #fff,inset 0 0 0 2.500px #9a9a9a"></div><div class="abs" style="left:215px;top:85.5px;width:40px;height:20px;background:#2e2e2e;border:1px solid #4a4a4a;border-radius:3px;font-size:12px;line-height:14px;padding:2px 0 0 5px;color:#f4f4f4">255</div>
<span class="abs" style="left:14px;top:113.5px;font-size:10.500px;line-height:12px;color:#f0f0f0">G:</span><div class="abs" style="left:27px;top:115.5px;width:183px;height:8px;border-radius:4px;background:linear-gradient(90deg,#ff00ff 4%,#ffffff 96%);box-shadow:0 0 0 1px #383838"></div><div class="abs" style="left:198px;top:112.5px;width:14px;height:14px;border-radius:50%;background:#3a3a3a"></div><div class="abs" style="left:199px;top:113.5px;width:12px;height:12px;border-radius:50%;background:#fff;border:1px solid #fff;box-shadow:inset 0 0 0 1.500px #fff,inset 0 0 0 2.500px #9a9a9a"></div><div class="abs" style="left:215px;top:109.5px;width:40px;height:20px;background:#2e2e2e;border:1px solid #4a4a4a;border-radius:3px;font-size:12px;line-height:14px;padding:2px 0 0 5px;color:#f4f4f4">255</div>
<span class="abs" style="left:15px;top:137.5px;font-size:10.500px;line-height:12px;color:#f0f0f0">B:</span><div class="abs" style="left:27px;top:139.5px;width:183px;height:8px;border-radius:4px;background:linear-gradient(90deg,#ffff00 4%,#ffffff 96%);box-shadow:0 0 0 1px #383838"></div><div class="abs" style="left:198px;top:136.5px;width:14px;height:14px;border-radius:50%;background:#3a3a3a"></div><div class="abs" style="left:199px;top:137.5px;width:12px;height:12px;border-radius:50%;background:#fff;border:1px solid #fff;box-shadow:inset 0 0 0 1.500px #fff,inset 0 0 0 2.500px #9a9a9a"></div><div class="abs" style="left:215px;top:133.5px;width:40px;height:20px;background:#2e2e2e;border:1px solid #4a4a4a;border-radius:3px;font-size:12px;line-height:14px;padding:2px 0 0 5px;color:#f4f4f4">255</div>
<div class="abs" style="left:13px;top:160px;width:243px;height:54px;border:1px solid #1e1e1e;background:linear-gradient(to bottom,#ffffff 0%,rgba(255,255,255,0) 50%,rgba(0,0,0,0) 50%,#000000 97%),linear-gradient(to right,#ff0000 0%,#ffff00 16.670%,#00ff00 33.330%,#00ffff 50%,#0000ff 66.670%,#ff00ff 83.330%,#ff0000 100%)"></div>
<span class="abs" style="left:14px;top:218px;font-size:11px;line-height:13px;color:#f0f0f0">Opacity</span>
<div class="abs" style="left:19px;top:234px;width:15px;height:15px;border-radius:50%;background:#fff;border:1px solid #505050"></div>
<div class="abs" style="left:40px;top:237px;width:145px;height:8px;border-radius:4px;background:linear-gradient(90deg,#ffffff 0%,rgba(255,255,255,0.600) 30%,rgba(120,120,120,0.250) 70%,rgba(60,60,60,0.100) 100%),repeating-conic-gradient(#5a5a5a 0 25%,#444 0 50%) 0 0/8px 8px;box-shadow:0 0 0 1px #383838"></div>
<div class="abs" style="left:174px;top:235px;width:13px;height:13px;border-radius:50%;background:#333;border:1.500px solid #f4f4f4;box-shadow:0 0 0 1px #3a3a3a"></div>
<div class="abs" style="left:191px;top:231px;width:60px;height:19px;background:#2e2e2e;border:1px solid #4a4a4a;border-radius:3px;font-size:12px;line-height:14px;padding:2px 0 0 6px;color:#f4f4f4;white-space:nowrap">100 %<span class="abs" style="left:43px;top:0;width:1px;height:17px;background:#4a4a4a"></span><span class="abs" style="left:48px;top:7px;border:3.500px solid transparent;border-top:4px solid #f0f0f0;border-bottom:0"></span></div>
<div class="abs" style="left:0px;top:258px;width:266px;height:25px;background:#2a2a2a"><div class="grip" style="left:8px;top:9px"></div><div class="tab on" style="left:18px;top:3px;width:41px;padding-left:5px;font-size:10.600px">Layers</div><div class="pm" style="left:247px;top:9px"></div></div>
<span class="abs" style="left:8px;top:292px;font-size:10px;line-height:12px;color:#f0f0f0">Opacity:</span>
<div class="dd" style="left:50px;top:287px;width:74px;height:20px;font-size:11.500px;padding:2px 0 0 5px;background:#2e2e2e">100 %</div>
<div class="dd" style="left:128px;top:287px;width:88px;height:20px;font-size:11.500px;padding:2px 0 0 5px;background:#2e2e2e">Normal</div>
<svg style="left:221px;top:290px" width="14" height="14" viewBox="-7 -7 14 14"><g fill="#c4c4c4"><rect x="-1.300" y="-6.500" width="2.600" height="3" transform="rotate(0)"/><rect x="-1.300" y="-6.500" width="2.600" height="3" transform="rotate(45)"/><rect x="-1.300" y="-6.500" width="2.600" height="3" transform="rotate(90)"/><rect x="-1.300" y="-6.500" width="2.600" height="3" transform="rotate(135)"/><rect x="-1.300" y="-6.500" width="2.600" height="3" transform="rotate(180)"/><rect x="-1.300" y="-6.500" width="2.600" height="3" transform="rotate(225)"/><rect x="-1.300" y="-6.500" width="2.600" height="3" transform="rotate(270)"/><rect x="-1.300" y="-6.500" width="2.600" height="3" transform="rotate(315)"/><circle r="4.800"/></g><circle r="1.900" fill="#3e3e3e"/></svg>
<div class="abs" style="left:242px;top:289px;width:16px;height:16px;background:#2a2a2a"></div>
<svg style="left:246px;top:291px" width="8" height="11" viewBox="0 0 8 11"><path d="M1.600 5V3.200a2.400 2.400 0 0 1 4.800 0V5" fill="none" stroke="#b0b0b0" stroke-width="1.300"/><rect x="0.300" y="4.800" width="7.400" height="5.800" rx="0.800" fill="#b0b0b0"/></svg>
<div class="abs" style="left:0px;top:312px;width:265px;height:292px;background:#333333"></div>
<div class="abs" style="left:0px;top:312px;width:247px;height:47px;background:#608bcb;border-bottom:1px solid #111"></div>
<div class="abs" style="left:21px;top:313px;width:44px;height:44px;border:1px solid #000;background:repeating-conic-gradient(#d2d2d2 0 25%,#ffffff 0 50%) 0 0/8.600px 8.600px;overflow:hidden"><svg style="left:0;top:0" width="42" height="42" viewBox="0 0 42 42"><rect x="14.500" y="0" width="13" height="42" fill="#ffffff" opacity="0.850"/><ellipse cx="18.500" cy="3.800" rx="3.800" ry="2.400" fill="#ee8e56"/><path d="M15 6.500h6" stroke="#8df4fc" stroke-width="1"/><rect x="23" y="2.500" width="1.500" height="3.500" fill="#e04030"/><circle cx="25.500" cy="1.500" r="0.800" fill="#fce67a"/><rect x="15.500" y="9.300" width="3" height="1.500" fill="#f08060"/><rect x="19" y="8.800" width="3" height="2.400" rx="1" fill="#b898e8"/><rect x="22.500" y="9.300" width="4" height="1.400" fill="#f8b050"/><rect x="16" y="12.500" width="7" height="3.800" rx="1.600" fill="#78e048"/><rect x="24" y="12.500" width="2.500" height="1.500" fill="#a06030"/><ellipse cx="19" cy="17.600" rx="4" ry="1.500" fill="#f09058"/><rect x="21.500" y="20.500" width="6" height="6" rx="2.500" fill="#58c0f4"/><rect x="22.500" y="24.500" width="4" height="1.200" fill="#a080e0"/><circle cx="20.500" cy="21" r="0.800" fill="#40a0f0"/><rect x="15.500" y="21.500" width="2.500" height="5" rx="1" fill="#d8a888"/><circle cx="17" cy="20.300" r="1" fill="#e05040"/><path d="M16 27c1 2 4 2.500 6 1.500l-0.500 4h-5z" fill="#f06048"/><rect x="17" y="31.500" width="7" height="3" fill="#fff4f0"/><path d="M23.500 28v5" stroke="#f08070" stroke-width="0.800"/><rect x="15.700" y="37.800" width="3.400" height="3.400" rx="1" fill="#40c8f4"/><rect x="19.800" y="37.800" width="3.800" height="3.200" rx="1" fill="#60dc50"/><path d="M24.500 41l1.500-2.500 2 2.500z" fill="#f06050"/></svg></div>
<span class="abs" style="left:69px;top:328px;font-size:11.800px;line-height:14px;font-weight:bold;color:#f4f6fa;white-space:nowrap">Background <span style="font-weight:normal;color:#ccd8ec;font-size:11.200px">(Pixel)</span></span>
<svg style="left:211px;top:330px" width="8" height="11" viewBox="0 0 8 11"><path d="M1.600 5V3.200a2.400 2.400 0 0 1 4.800 0V5" fill="none" stroke="#98a0ac" stroke-width="1.300"/><rect x="0.300" y="4.800" width="7.400" height="5.800" rx="0.800" fill="#98a0ac"/></svg>
<svg style="left:231px;top:329px" width="12" height="12" viewBox="0 0 12 12"><rect x="0.500" y="0.500" width="11" height="11" rx="1.500" fill="none" stroke="#b4b8c0" stroke-width="1.100"/><path d="M2.800 6.200l2.200 2.600 4.400-6" fill="none" stroke="#c8ccd4" stroke-width="1.400"/></svg>
<div class="abs" style="left:5px;top:605px;width:21px;height:20px;background:#2b2b2b"></div>
<svg style="left:7px;top:607px" width="17" height="16" viewBox="0 0 17 16"><path d="M1 3.500l7.500 3.500 7.500-3.500M1 7l7.500 3.500L16 7M1 10.500l7.500 3.500 7.500-3.500" fill="none" stroke="#c8c8c8" stroke-width="1.500"/><path d="M1 3l7.500-2.500L16 3l-7.500 3.500z" fill="#c8c8c8"/></svg>
<svg style="left:92px;top:609px" width="15" height="12" viewBox="0 0 15 12"><rect width="15" height="12" rx="1.500" fill="#a8a8a8"/><circle cx="7.500" cy="6" r="4" fill="#3a3a3a"/></svg>
<svg style="left:116px;top:609px" width="12" height="12" viewBox="0 0 12 12"><circle cx="6" cy="6" r="5.300" fill="none" stroke="#a8a8a8" stroke-width="1.400"/><path d="M2.200 9.800A5.300 5.300 0 0 0 9.800 2.200z" fill="#a8a8a8"/></svg>
<span class="abs" style="left:137px;top:606px;font-family:'Liberation Serif',serif;font-style:italic;font-size:15px;line-height:16px;color:#b0b0b0">fx</span>
<svg style="left:161px;top:609px" width="11" height="12" viewBox="0 0 11 12"><path d="M0 0h11L6.500 6 11 12H0l4.500-6z" fill="#b4b4b4"/></svg>
<svg style="left:199px;top:608px" width="12" height="11" viewBox="0 0 12 11"><path d="M0 1h4.500l1 1.500H12V11H0z" fill="#6c6c6c"/></svg>
<div class="abs" style="left:224px;top:609px;width:10px;height:12px;background:repeating-conic-gradient(#cfcfcf 0 25%,#555 0 50%) 0 0/4px 4px;border:1px solid #cfcfcf"></div>
<div class="abs" style="left:211px;top:596px;width:31px;height:32px;border:3px solid #ee1111;z-index:8"></div>
<svg style="left:246px;top:608px" width="11" height="13" viewBox="0 0 11 13"><path d="M0.500 2.500h10M3.800 2.300V0.700h3.400v1.600" stroke="#b4b4b4" stroke-width="1.300" fill="none"/><path d="M1.300 3.800h8.400l-0.700 9H2z" fill="#b4b4b4"/><path d="M3.800 5v6.500M5.500 5v6.500M7.200 5v6.500" stroke="#3e3e3e" stroke-width="0.800"/></svg>
<!--RIGHT-END-->
</div>
<!-- STATUS -->
<div id="status" class="abs">
<span style="position:absolute;left:17px;top:7px"><b>Drag</b> to create a new Rectangle shape, +<b>Shift</b> to constrain proportions, +<b>Ctrl</b> to create from centre point, +<b>RightMouse</b> to create along line, +<b>Alt</b> to ignore snapping. <b>Click</b> to select a shape to change its properties.</span>
<div class="abs" style="left:1101px;top:5px;width:95px;height:24px;background:#ffffff;border-radius:3px 3px 0 0;box-shadow:0 0 0 1px #bdbdbd;z-index:9"><span class="abs" style="left:5px;top:4px;font-size:11.900px;line-height:14px;color:#505050;white-space:nowrap">Add Pixel Layer</span></div>
<svg style="left:1208px;top:14px" width="9" height="9" viewBox="0 0 9 9"><g fill="#7a7a7a"><rect x="6.500" y="0.500" width="1.500" height="1.500"/><rect x="3.500" y="3.500" width="1.500" height="1.500"/><rect x="6.500" y="3.500" width="1.500" height="1.500"/><rect x="0.500" y="6.500" width="1.500" height="1.500"/><rect x="3.500" y="6.500" width="1.500" height="1.500"/><rect x="6.500" y="6.500" width="1.500" height="1.500"/></g></svg>
</div>
</body>
</html>
